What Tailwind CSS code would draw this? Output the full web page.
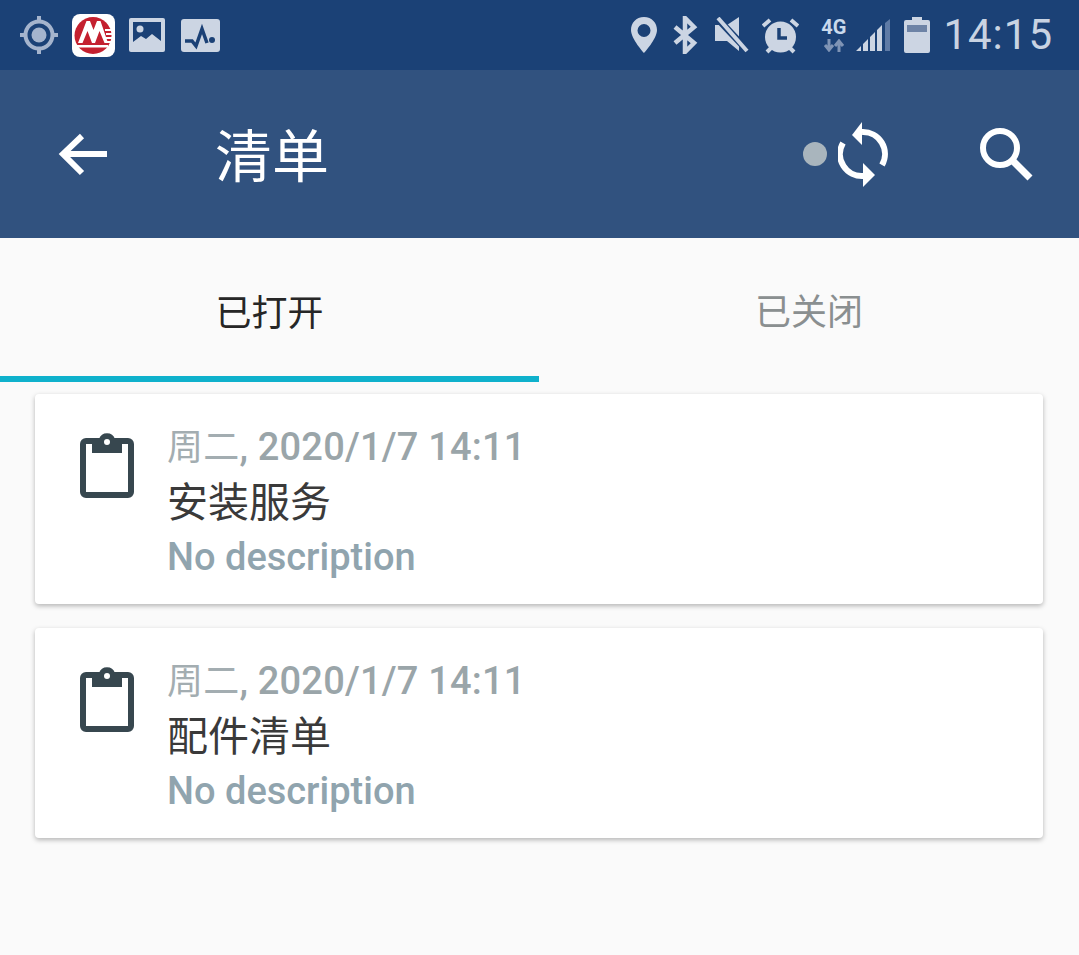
<!DOCTYPE html>
<html lang="zh">
<head>
  <meta charset="UTF-8" />
  <title>清单</title>
  <script src="https://cdn.jsdelivr.net/npm/@tailwindcss/browser@4"></script>
</head>
<body class="bg-[#fafafa] h-[955px] w-[1079px] overflow-hidden font-['Roboto','Noto_Sans_CJK_SC',sans-serif]">

  <!-- status bar -->
  <div class="h-[70px] bg-[#1b4176] flex items-center pl-[20px] pr-[26px] text-[#c9d3e2]">
    <svg class="w-[40px] h-[40px]" viewBox="0 0 40 40" fill="none">
      <circle cx="19" cy="20" r="13.500" stroke="#a5b4cd" stroke-width="4" />
      <circle cx="19" cy="20" r="7.500" fill="#a5b4cd" />
      <path d="M19 1v6M19 33v6M0 20h6M32 20h6" stroke="#a5b4cd" stroke-width="4" />
    </svg>
    <svg class="ml-[12px] w-[43px] h-[43px]" viewBox="0 0 43 43">
      <rect width="43" height="43" rx="8" fill="#fff" />
      <circle cx="21" cy="21.500" r="18.500" fill="#c4202f" />
      <path d="M6 29 14.500 7h3.500l3.500 9L25 7h3.500L36 29z" fill="#fff" />
      <path d="M15.500 17 10.500 29h9.500zM27.500 17 23 29h9.500z" fill="#c4202f" />
      <path d="M5 31h31v2.500H5z" fill="#fff" />
      <path d="M33 16h9M34 20h9M34 24h9M34 28h8" stroke="#fff" stroke-width="2" />
    </svg>
    <svg class="ml-[14px] w-[36px] h-[36px]" viewBox="0 0 36 36">
      <rect width="36" height="34" y="1" rx="2" fill="#ccd5e3" />
      <rect x="4" y="5" width="28" height="25" fill="#1b4176" />
      <circle cx="11" cy="12" r="3.500" fill="#ccd5e3" />
      <path d="M4 25l8-6 5 3 6-5 9 7v6H4z" fill="#ccd5e3" />
    </svg>
    <svg class="ml-[16px] w-[39px] h-[33px]" viewBox="0 0 39 33">
      <rect width="39" height="33" rx="3" fill="#ccd5e3" />
      <path d="M4 22h7l4 5 6-17 5 14" fill="none" stroke="#1b4176" stroke-width="3.500" />
      <circle cx="31" cy="21" r="3" fill="#1b4176" />
    </svg>

    <svg class="ml-auto w-[28px] h-[38px]" viewBox="0 0 28 38">
      <path fill-rule="evenodd" d="M14 1C6 1 1 7 1 14c0 9 13 23 13 23s13-14 13-23C27 7 22 1 14 1zm0 7a6.500 6.500 0 1 1 0 13 6.500 6.500 0 0 1 0-13z" fill="#ccd5e3" />
    </svg>
    <svg class="ml-[14px] w-[26px] h-[38px]" viewBox="0 0 26 38" fill="none">
      <path d="M3 11l19 16-9 9V2l9 9L3 27" stroke="#ccd5e3" stroke-width="4.500" />
    </svg>
    <svg class="ml-[17px] w-[34px] h-[36px]" viewBox="0 0 34 36">
      <path d="M0 8h12L24 0v34L12 24H0z" fill="#ccd5e3" />
      <path d="M0 -1l33 35" stroke="#1b4176" stroke-width="7" />
      <path d="M3 1l29 33" stroke="#ccd5e3" stroke-width="4" />
    </svg>
    <svg class="ml-[13px] w-[37px] h-[37px]" viewBox="0 0 37 37" fill="none">
      <circle cx="18.500" cy="20" r="15.500" fill="#ccd5e3" />
      <path d="M17 11v10h8" stroke="#1b4176" stroke-width="3.500" />
      <path d="M1 9l7-6M36 9l-7-6M5 35l4-4M32 35l-4-4" stroke="#ccd5e3" stroke-width="4" />
    </svg>
    <div class="ml-[20px] w-[29px] flex flex-col items-center leading-none">
      <span class="text-[20px] font-bold text-[#c9d9ec] h-[20px] mt-[-2px]">4G</span>
      <svg class="w-[22px] h-[13px] mt-[2px]" viewBox="0 0 22 13" fill="none">
        <path d="M6 0v9M2 6l4 5 4-5M16 13V4M12 7l4-5 4 5" stroke="#7f94b5" stroke-width="3" />
      </svg>
    </div>
    <svg class="ml-[7px] w-[37px] h-[33px]" viewBox="0 0 37 33">
      <path d="M1 32l5-5v5zM8 25l5-5v12H8zM15 18l5-5v19h-5zM22 11l5-5v26h-5z" fill="#ccd5e3" />
      <path d="M30 4l5-4v32h-5z" fill="#5f7ba6" />
    </svg>
    <svg class="ml-[12px] w-[26px] h-[36px]" viewBox="0 0 26 36">
      <path d="M8 0h10v3h6a2 2 0 0 1 2 2v29a2 2 0 0 1-2 2H2a2 2 0 0 1-2-2V5a2 2 0 0 1 2-2h6z" fill="#ccd5e3" />
      <rect x="3" y="8" width="20" height="7" fill="#6d83a6" />
    </svg>
    <span class="ml-[13px] text-[42px] leading-none text-[#c9d3e2] tracking-[1px] font-['Roboto']">14:15</span>
  </div>

  <!-- app bar -->
  <div class="h-[168px] bg-[#31527f] flex items-center">
    <svg class="ml-[56px] mt-[4px] w-[54px] h-[54px]" viewBox="0 0 54 54" fill="none">
      <path d="M51 25H8M26 7 7 25l19 19" stroke="#fff" stroke-width="6" />
    </svg>
    <h1 class="ml-[105px] pt-[7px] text-[57px] leading-none text-white font-normal">清单</h1>
    <span class="ml-auto w-[24px] h-[24px] rounded-full bg-[#a9b5bd]"></span>
    <svg class="w-[50px] h-[70px] ml-[11px]" viewBox="0 0 50 70" fill="none">
      <path d="M24 13A22 22 0 0 1 44 46" stroke="#fff" stroke-width="6" />
      <path d="M14 16 24 3v23z" fill="#fff" />
      <path d="M26 57A22 22 0 0 1 5 24" stroke="#fff" stroke-width="6" />
      <path d="M37 56 25 68V44z" fill="#fff" />
    </svg>
    <svg class="ml-[91px] mr-[46px] w-[54px] h-[54px]" viewBox="0 0 54 54" fill="none">
      <circle cx="21" cy="21" r="17" stroke="#fff" stroke-width="6" />
      <path d="M33 33l18 18" stroke="#fff" stroke-width="7" />
    </svg>
  </div>

  <!-- tabs -->
  <div class="flex h-[144px] text-[36px]">
    <div class="w-[539px] h-[144px] pt-[14px] flex items-center justify-center border-b-[6px] border-[#0fb1cc] text-[#262626]">已打开</div>
    <div class="w-[540px] h-[144px] pt-[6px] flex items-center justify-center text-[#8a8f90]">已关闭</div>
  </div>

  <!-- checklist cards -->
  <div class="pl-[35px] w-[1043px] pt-[12px] flex flex-col gap-[24px]">
    <div class="h-[210px] bg-white rounded-[4px] shadow-[0_2px_5px_rgba(0,0,0,0.28)] flex">
      <svg class="mt-[39px] ml-[45px] w-[54px] h-[66px] shrink-0" viewBox="0 0 54 66" fill="none">
        <rect x="3" y="8" width="48" height="54" rx="3" stroke="#37474f" stroke-width="6" />
        <path d="M12 6h7a8.500 8.500 0 0 1 16 0h7v14H12z" fill="#37474f" />
        <circle cx="27" cy="9" r="3" fill="#fff" />
      </svg>
      <div class="ml-[33px] pt-[30px]">
        <p class="text-[38px] leading-[46px] h-[46px] text-[#9aa5a9] font-medium tracking-[0.2px] whitespace-nowrap"><span class="text-[36px] font-normal text-[#a3adb1]">周二</span>, 2020/1/7 14:11</p>
        <p class="mt-[10px] text-[41px] leading-[46px] h-[46px] text-[#3a3a3a]">安装服务</p>
        <p class="mt-[8px] text-[38px] leading-[46px] h-[46px] text-[#90a4ae] font-medium">No description</p>
      </div>
    </div>
    <div class="h-[210px] bg-white rounded-[4px] shadow-[0_2px_5px_rgba(0,0,0,0.28)] flex">
      <svg class="mt-[39px] ml-[45px] w-[54px] h-[66px] shrink-0" viewBox="0 0 54 66" fill="none">
        <rect x="3" y="8" width="48" height="54" rx="3" stroke="#37474f" stroke-width="6" />
        <path d="M12 6h7a8.500 8.500 0 0 1 16 0h7v14H12z" fill="#37474f" />
        <circle cx="27" cy="9" r="3" fill="#fff" />
      </svg>
      <div class="ml-[33px] pt-[30px]">
        <p class="text-[38px] leading-[46px] h-[46px] text-[#9aa5a9] font-medium tracking-[0.2px] whitespace-nowrap"><span class="text-[36px] font-normal text-[#a3adb1]">周二</span>, 2020/1/7 14:11</p>
        <p class="mt-[10px] text-[41px] leading-[46px] h-[46px] text-[#3a3a3a]">配件清单</p>
        <p class="mt-[8px] text-[38px] leading-[46px] h-[46px] text-[#90a4ae] font-medium">No description</p>
      </div>
    </div>
  </div>
</body>
</html>
